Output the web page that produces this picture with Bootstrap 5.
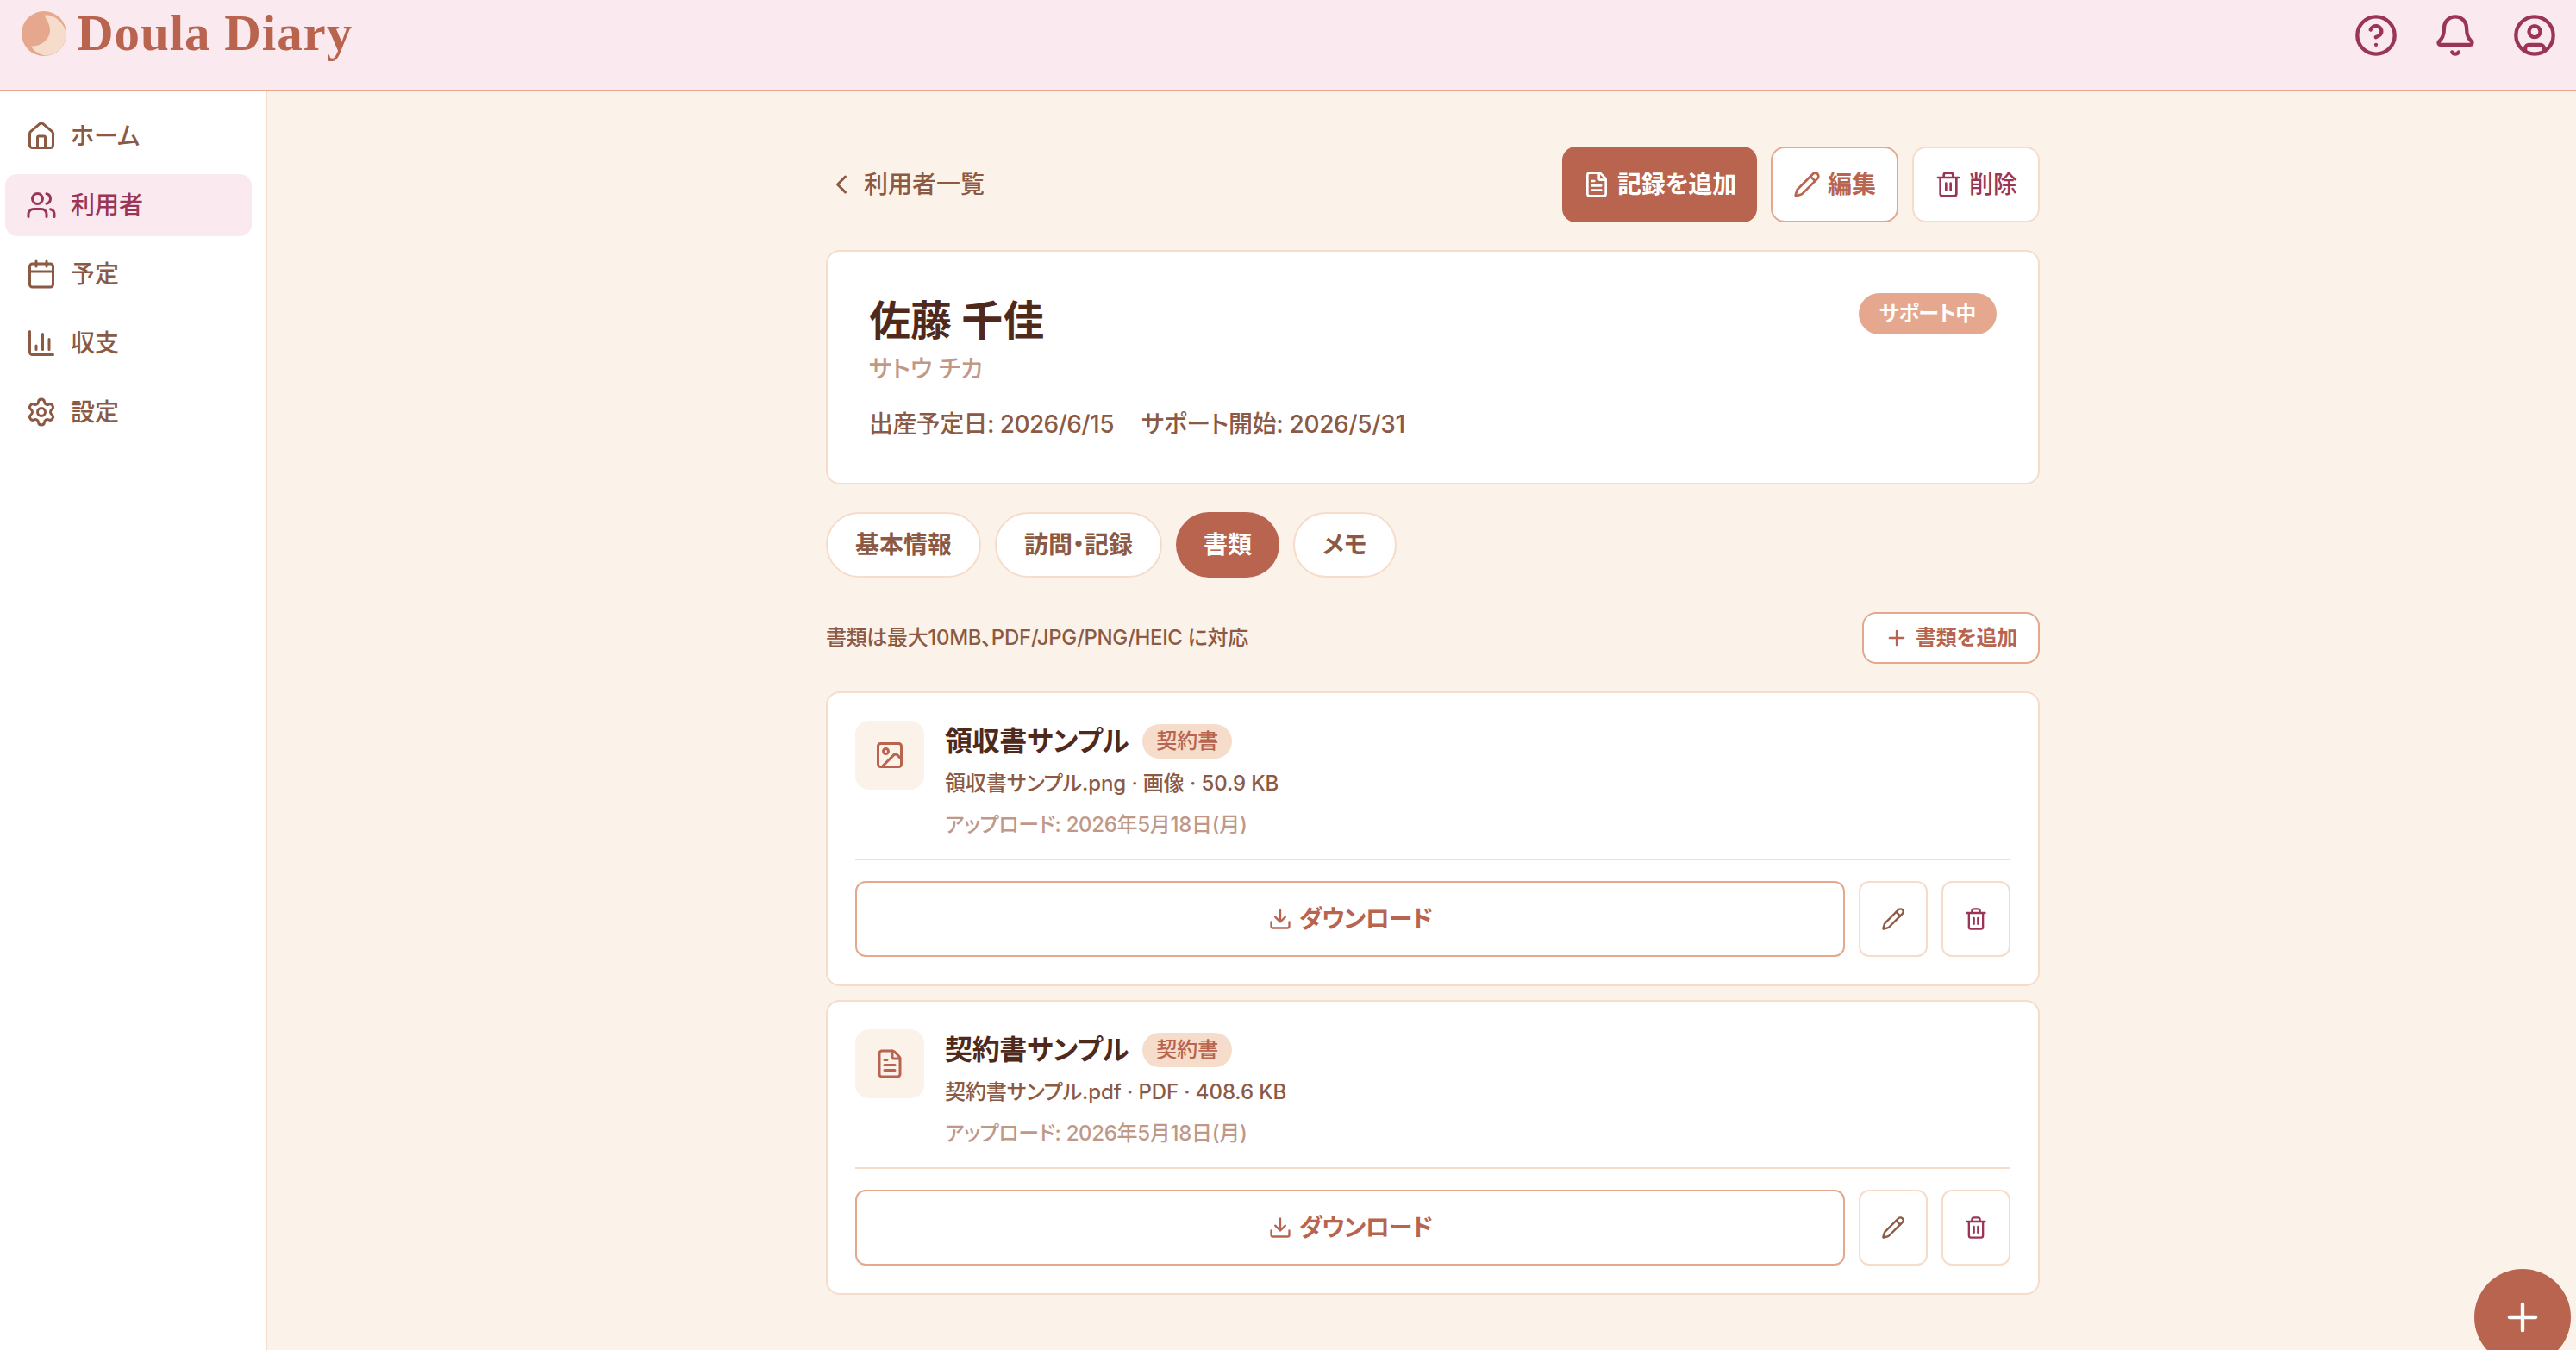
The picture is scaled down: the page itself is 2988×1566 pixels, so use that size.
<!DOCTYPE html>
<html lang="ja">
<head>
<meta charset="utf-8">
<meta name="viewport" content="width=device-width, initial-scale=1">
<title>Doula Diary</title>
<link href="https://cdn.jsdelivr.net/npm/bootstrap@5.3.0/dist/css/bootstrap.min.css" rel="stylesheet">
<style>
:root{--terra:#b8644e;--peach:#e5a88e;--blush:#f5dccb;--cream:#fbf2e9;--rose:#fbe9f0;--wine:#9b3556;--brown:#8c5a44;--cocoa:#4f2a1b;--faded:#c09888}
body{font-family:Inter,"Noto Sans CJK JP",sans-serif;font-size:28px;line-height:40px;font-weight:500;font-feature-settings:"palt";background:var(--cream);color:var(--brown);height:100vh;overflow:hidden}
button{font-feature-settings:inherit}
svg{flex:none;display:block}
.ico{width:32px;height:32px;fill:none;stroke:currentColor;stroke-width:2;stroke-linecap:round;stroke-linejoin:round}
.ico-s{width:28px;height:28px}
.ico-m{width:36px;height:36px}
.ico-l{width:52px;height:52px}
.topbar{height:106px;background:var(--rose);border-bottom:2px solid var(--peach);padding:0 22px 0 25px;color:var(--wine)}
.brand-name{font-family:"Liberation Serif",serif;font-weight:700;font-size:59px;line-height:64px;letter-spacing:.95px;color:var(--terra);margin:6px 0 0 12px}
.brand-moon{margin-top:13px}
.top-icons{gap:40px;margin-top:15px}
.side{width:310px;background:#fff;border-right:2px solid var(--blush);padding:16px 16px 0 6px;gap:8px}
.side a{height:72px;gap:16px;padding-left:24px;border-radius:14px;color:inherit;text-decoration:none}
.side a.current{background:var(--rose);color:var(--wine)}
.shell{height:calc(100vh - 106px)}
.content{padding:64px 0 0 26px}
.column{width:1408px}
.back{gap:8px;color:inherit;text-decoration:none}
.act{height:88px;border:2px solid var(--blush);border-radius:16px;background:#fff;font-weight:700;gap:8px;padding:0 24px;white-space:nowrap;color:var(--terra);font-size:28px;line-height:40px}
.act-fill{background:var(--terra);border:0;color:#fff;letter-spacing:-.18px}
.act-line{border-color:var(--peach)}
.act-danger{color:var(--wine);font-weight:500}
.act-plain{color:var(--brown)}
.panel{background:#fff;border:2px solid var(--blush);border-radius:16px}
.profile{height:272px;margin-top:32px;padding:48px}
.who{font-size:48px;line-height:64px;font-weight:700;color:var(--cocoa);margin:0}
.kana{color:var(--faded);line-height:40px;margin-top:4px}
.dates{gap:32px;margin-top:24px;letter-spacing:-.6px}
.dates span+span{letter-spacing:-.35px}
.state{height:48px;padding:0 24px;border-radius:24px;background:var(--peach);color:#fff;font-size:24px;font-weight:700;line-height:48px;letter-spacing:-.3px}
.tabs-row{gap:16px;margin-top:32px}
.tab-pill{height:76px;line-height:72px;padding:0 32px;border:2px solid var(--blush);border-radius:38px;background:#fff;font-weight:700;color:var(--brown);font-size:28px}
.tab-pill.on{background:var(--terra);border:0;color:#fff;line-height:76px}
.note-row{margin:40px 0 32px;height:60px}
.note{font-size:24px;letter-spacing:-.33px}
.act-add{height:60px;font-size:24px;letter-spacing:-.2px}
.doc{height:342px;padding:32px;margin-bottom:16px}
.tile{width:80px;height:80px;border-radius:16px;background:var(--cream);color:var(--terra)}
.doc-head{gap:24px;height:160px}
.doc-title{font-size:32px;line-height:44px;font-weight:700;color:var(--cocoa);letter-spacing:-.35px}
.doc-name{margin-top:2px}
.chip{height:40px;line-height:40px;border-radius:20px;padding:0 16px;background:var(--blush);color:var(--terra);font-size:24px}
.meta{font-size:24px;line-height:40px;letter-spacing:-.1px;margin-top:7px}
.meta-up{color:var(--faded);letter-spacing:-.3px;margin-top:8px}
.doc-foot{border-top:2px solid var(--blush);padding-top:24px;gap:16px}
.act-get{letter-spacing:-.9px;border-radius:12px}
.act-icon{width:80px;padding:0;border-radius:12px}
.fab{position:fixed;left:2870px;top:1472px;width:112px;height:112px;border-radius:50%;border:0;background:var(--terra);color:#fff}
</style>
</head>
<body>
<svg class="d-none">
<symbol id="file" viewBox="0 0 24 24"><path d="M6 22a2 2 0 0 1-2-2V4a2 2 0 0 1 2-2h8a2.4 2.4 0 0 1 1.704.706l3.588 3.588A2.4 2.4 0 0 1 20 8v12a2 2 0 0 1-2 2z"/><path d="M14 2v5a1 1 0 0 0 1 1h5M10 9H8M16 13H8M16 17H8"/></symbol>
<symbol id="pencil" viewBox="0 0 24 24"><path d="M21.174 6.812a1 1 0 0 0-3.986-3.987L3.842 16.174a2 2 0 0 0-.5.83l-1.321 4.352a.5.5 0 0 0 .623.622l4.353-1.32a2 2 0 0 0 .83-.497z"/><path d="m15 5 4 4"/></symbol>
<symbol id="trash" viewBox="0 0 24 24"><path d="M10 11v6M14 11v6M19 6v14a2 2 0 0 1-2 2H7a2 2 0 0 1-2-2V6M3 6h18M8 6V4a2 2 0 0 1 2-2h4a2 2 0 0 1 2 2v2"/></symbol>
<symbol id="get" viewBox="0 0 24 24"><path d="M12 15V3M21 15v4a2 2 0 0 1-2 2H5a2 2 0 0 1-2-2v-4M7 10l5 5 5-5"/></symbol>
<symbol id="plus" viewBox="0 0 24 24"><path d="M5 12h14M12 5v14"/></symbol>
</svg>

<header class="topbar d-flex justify-content-between align-items-start">
  <div class="d-flex align-items-start">
    <svg class="brand-moon" width="52" height="52" viewBox="0 0 52 52"><circle cx="26" cy="26" r="26" fill="#e5a88e"/><path d="M26.7 4.5C37 3.5 47 11 50.800 22L52 26A26 26 0 0 1 28 51.500C21 50.500 13 45.500 11.200 40.500C22 41 33 33 33 22C33 14 28 9 26.700 4.500Z" fill="#f5dccb"/></svg>
    <div class="brand-name">Doula Diary</div>
  </div>
  <div class="top-icons d-flex">
    <svg class="ico ico-l" viewBox="0 0 24 24"><circle cx="12" cy="12" r="10"/><path d="M9.090 9a3 3 0 0 1 5.830 1c0 2-3 3-3 3M12 17h.01"/></svg>
    <svg class="ico ico-l" viewBox="0 0 24 24"><path d="M10.268 21a2 2 0 0 0 3.464 0M3.262 15.326A1 1 0 0 0 4 17h16a1 1 0 0 0 .740-1.673C19.410 13.956 18 12.499 18 8A6 6 0 0 0 6 8c0 4.499-1.411 5.956-2.738 7.326"/></svg>
    <svg class="ico ico-l" viewBox="0 0 24 24"><circle cx="12" cy="12" r="10"/><circle cx="12" cy="10" r="3"/><path d="M7 20.662V19a2 2 0 0 1 2-2h6a2 2 0 0 1 2 2v1.662"/></svg>
  </div>
</header>

<div class="shell d-flex">
  <nav class="side d-flex flex-column flex-shrink-0">
    <a href="#" class="d-flex align-items-center"><svg class="ico ico-m" viewBox="0 0 24 24"><path d="M15 21v-8a1 1 0 0 0-1-1h-4a1 1 0 0 0-1 1v8"/><path d="M3 10a2 2 0 0 1 .709-1.528l7-6a2 2 0 0 1 2.582 0l7 6A2 2 0 0 1 21 10v9a2 2 0 0 1-2 2H5a2 2 0 0 1-2-2z"/></svg>ホーム</a>
    <a href="#" class="current d-flex align-items-center"><svg class="ico ico-m" viewBox="0 0 24 24"><path d="M16 21v-2a4 4 0 0 0-4-4H6a4 4 0 0 0-4 4v2M16 3.128a4 4 0 0 1 0 7.744M22 21v-2a4 4 0 0 0-3-3.870"/><circle cx="9" cy="7" r="4"/></svg>利用者</a>
    <a href="#" class="d-flex align-items-center"><svg class="ico ico-m" viewBox="0 0 24 24"><path d="M8 2v4M16 2v4M3 10h18"/><rect x="3" y="4" width="18" height="18" rx="2"/></svg>予定</a>
    <a href="#" class="d-flex align-items-center"><svg class="ico ico-m" viewBox="0 0 24 24"><path d="M3 3v16a2 2 0 0 0 2 2h16M18 17V9M13 17V5M8 17v-3"/></svg>収支</a>
    <a href="#" class="d-flex align-items-center"><svg class="ico ico-m" viewBox="0 0 24 24"><path d="M9.671 4.136a2.340 2.340 0 0 1 4.659 0 2.340 2.340 0 0 0 3.319 1.915 2.340 2.340 0 0 1 2.330 4.033 2.340 2.340 0 0 0 0 3.831 2.340 2.340 0 0 1-2.330 4.033 2.340 2.340 0 0 0-3.319 1.915 2.340 2.340 0 0 1-4.659 0 2.340 2.340 0 0 0-3.320-1.915 2.340 2.340 0 0 1-2.330-4.033 2.340 2.340 0 0 0 0-3.831A2.340 2.340 0 0 1 6.350 6.051a2.340 2.340 0 0 0 3.319-1.915"/><circle cx="12" cy="12" r="3"/></svg>設定</a>
  </nav>

  <main class="content flex-grow-1 d-flex justify-content-center align-items-start">
    <div class="column">
      <div class="d-flex justify-content-between align-items-center">
        <a href="#" class="back d-flex align-items-center"><svg class="ico ico-m" viewBox="0 0 24 24"><path d="m15 18-6-6 6-6"/></svg>利用者一覧</a>
        <div class="d-flex gap-3">
          <button class="act act-fill d-flex align-items-center"><svg class="ico"><use href="#file"/></svg>記録を追加</button>
          <button class="act act-line d-flex align-items-center"><svg class="ico"><use href="#pencil"/></svg>編集</button>
          <button class="act act-danger d-flex align-items-center"><svg class="ico"><use href="#trash"/></svg>削除</button>
        </div>
      </div>

      <section class="panel profile d-flex justify-content-between align-items-start">
        <div>
          <h1 class="who">佐藤 千佳</h1>
          <div class="kana">サトウ チカ</div>
          <div class="dates d-flex"><span>出産予定日: 2026/6/15</span><span>サポート開始: 2026/5/31</span></div>
        </div>
        <span class="state">サポート中</span>
      </section>

      <div class="tabs-row d-flex">
        <button class="tab-pill">基本情報</button>
        <button class="tab-pill">訪問・記録</button>
        <button class="tab-pill on">書類</button>
        <button class="tab-pill">メモ</button>
      </div>

      <div class="note-row d-flex justify-content-between align-items-center">
        <span class="note">書類は最大10MB、PDF/JPG/PNG/HEIC に対応</span>
        <button class="act act-line act-add d-flex align-items-center"><svg class="ico ico-s"><use href="#plus"/></svg>書類を追加</button>
      </div>

      <article class="panel doc">
        <div class="doc-head d-flex">
          <div class="tile d-flex align-items-center justify-content-center flex-shrink-0"><svg class="ico ico-m" viewBox="0 0 24 24"><rect x="3" y="3" width="18" height="18" rx="2"/><circle cx="9" cy="9" r="2"/><path d="m21 15-3.086-3.086a2 2 0 0 0-2.828 0L6 21"/></svg></div>
          <div>
            <div class="doc-name d-flex align-items-center gap-3"><span class="doc-title">領収書サンプル</span><span class="chip">契約書</span></div>
            <div class="meta">領収書サンプル.png · 画像 · 50.9 KB</div>
            <div class="meta meta-up">アップロード: 2026年5月18日(月)</div>
          </div>
        </div>
        <div class="doc-foot d-flex">
          <button class="act act-line act-get d-flex align-items-center justify-content-center flex-grow-1"><svg class="ico ico-s"><use href="#get"/></svg>ダウンロード</button>
          <button class="act act-icon act-plain d-flex align-items-center justify-content-center"><svg class="ico ico-s"><use href="#pencil"/></svg></button>
          <button class="act act-icon act-danger d-flex align-items-center justify-content-center"><svg class="ico ico-s"><use href="#trash"/></svg></button>
        </div>
      </article>

      <article class="panel doc mb-0">
        <div class="doc-head d-flex">
          <div class="tile d-flex align-items-center justify-content-center flex-shrink-0"><svg class="ico ico-m"><use href="#file"/></svg></div>
          <div>
            <div class="doc-name d-flex align-items-center gap-3"><span class="doc-title">契約書サンプル</span><span class="chip">契約書</span></div>
            <div class="meta">契約書サンプル.pdf · PDF · 408.6 KB</div>
            <div class="meta meta-up">アップロード: 2026年5月18日(月)</div>
          </div>
        </div>
        <div class="doc-foot d-flex">
          <button class="act act-line act-get d-flex align-items-center justify-content-center flex-grow-1"><svg class="ico ico-s"><use href="#get"/></svg>ダウンロード</button>
          <button class="act act-icon act-plain d-flex align-items-center justify-content-center"><svg class="ico ico-s"><use href="#pencil"/></svg></button>
          <button class="act act-icon act-danger d-flex align-items-center justify-content-center"><svg class="ico ico-s"><use href="#trash"/></svg></button>
        </div>
      </article>
    </div>
  </main>
</div>

<button class="fab d-flex align-items-center justify-content-center p-0"><svg class="ico ico-l"><use href="#plus"/></svg></button>
<script src="https://cdn.jsdelivr.net/npm/bootstrap@5.3.0/dist/js/bootstrap.bundle.min.js"></script>
</body>
</html>
